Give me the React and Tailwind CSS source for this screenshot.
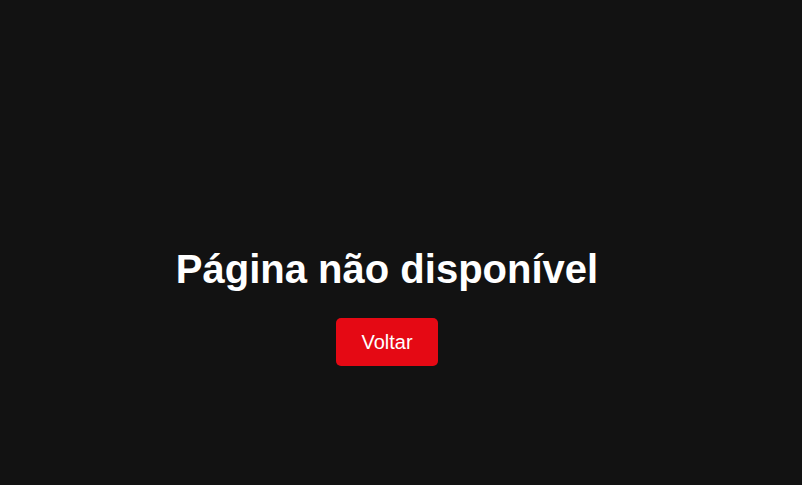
export default function App() {
  return (
    <div className="min-h-screen bg-[#121212] flex flex-col items-center pt-[246px] pr-[28px] font-['Liberation_Sans',Arial,sans-serif] text-white">
      {/* Not found */}
      <h1 className="text-[40px] font-bold leading-[46px] mb-[26px]">Página não disponível</h1>
      <button className="h-12 w-[102px] bg-[#e50914] rounded-[5px] text-[20px] text-white hover:bg-[#c40812]">
        Voltar
      </button>
    </div>
  );
}
